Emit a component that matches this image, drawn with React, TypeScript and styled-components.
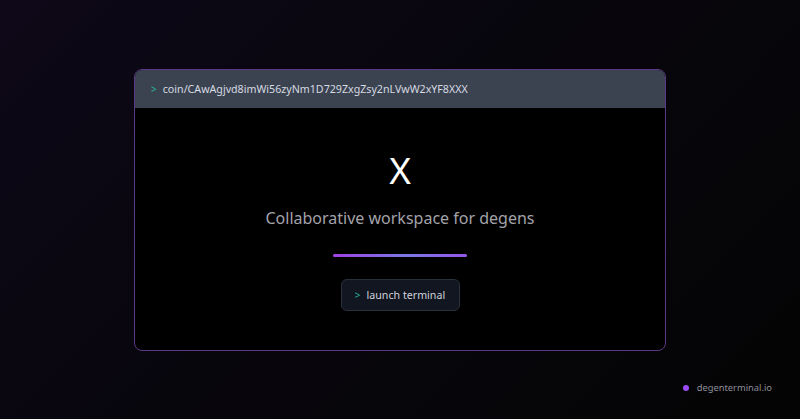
import React from "react";
import styled, { createGlobalStyle } from "styled-components";

const Global = createGlobalStyle`
  html, body { margin: 0; padding: 0; }
  body { font-family: "Noto Sans", "Open Sans", sans-serif; }
`;

const Page = styled.div`
  width: 800px;
  height: 419px;
  box-sizing: border-box;
  background: linear-gradient(135deg, #0e0818 0%, #08060d 45%, #040404 100%);
  display: flex;
  flex-direction: column;
  align-items: center;
  padding-top: 69px;
  position: relative;
  overflow: hidden;
`;

const Card = styled.div`
  width: 532px;
  height: 282px;
  box-sizing: border-box;
  border: 1.5px solid #5a3886;
  border-radius: 8px;
  background: #000;
  overflow: hidden;
  display: flex;
  flex-direction: column;
`;

const Header = styled.div`
  height: 38px;
  flex: none;
  background: #3c4350;
  display: flex;
  align-items: center;
  padding-left: 16px;
  gap: 6px;
  font-size: 10.67px;
  color: #d6dae2;
`;

const Prompt = styled.span`
  color: #27b39b;
  font-size: 10px;
`;

const Body = styled.div`
  flex: 1;
  display: flex;
  flex-direction: column;
  align-items: center;
  padding-top: 40px;
`;

const Logo = styled.div`
  font-size: 37px;
  line-height: 44px;
  color: #fff;
  font-weight: 400;
`;

const Tagline = styled.div`
  margin-top: 14px;
  font-size: 16px;
  line-height: 24px;
  color: #a3a3aa;
`;

const Bar = styled.div`
  margin-top: 24px;
  width: 134px;
  height: 3px;
  border-radius: 2px;
  background: linear-gradient(90deg, #a042e4 0%, #7a78e4 55%, #9656ea 100%);
`;

const Button = styled.div`
  margin-top: 22px;
  height: 32px;
  width: 119px;
  box-sizing: border-box;
  background: #121620;
  border: 1px solid #2a303c;
  border-radius: 6px;
  display: flex;
  align-items: center;
  justify-content: center;
  gap: 6px;
  font-size: 10.67px;
  color: #ced2da;
`;

const Footer = styled.div`
  position: absolute;
  right: 28px;
  bottom: 25px;
  display: flex;
  align-items: center;
  gap: 8px;
  font-size: 9.33px;
  color: #8d8d98;
`;

const Dot = styled.span`
  width: 6px;
  height: 6px;
  border-radius: 50%;
  background: #9a4cf2;
`;

export default function App() {
  return (
    <>
      <Global />
      <Page>
        <Card>
          <Header>
            <Prompt>&gt;</Prompt>
            <span>coin/CAwAgjvd8imWi56zyNm1D729ZxgZsy2nLVwW2xYF8XXX</span>
          </Header>
          <Body>
            <Logo>X</Logo>
            <Tagline>Collaborative workspace for degens</Tagline>
            <Bar />
            <Button>
              <Prompt>&gt;</Prompt>
              <span>launch terminal</span>
            </Button>
          </Body>
        </Card>
        <Footer>
          <Dot />
          <span>degenterminal.io</span>
        </Footer>
      </Page>
    </>
  );
}
